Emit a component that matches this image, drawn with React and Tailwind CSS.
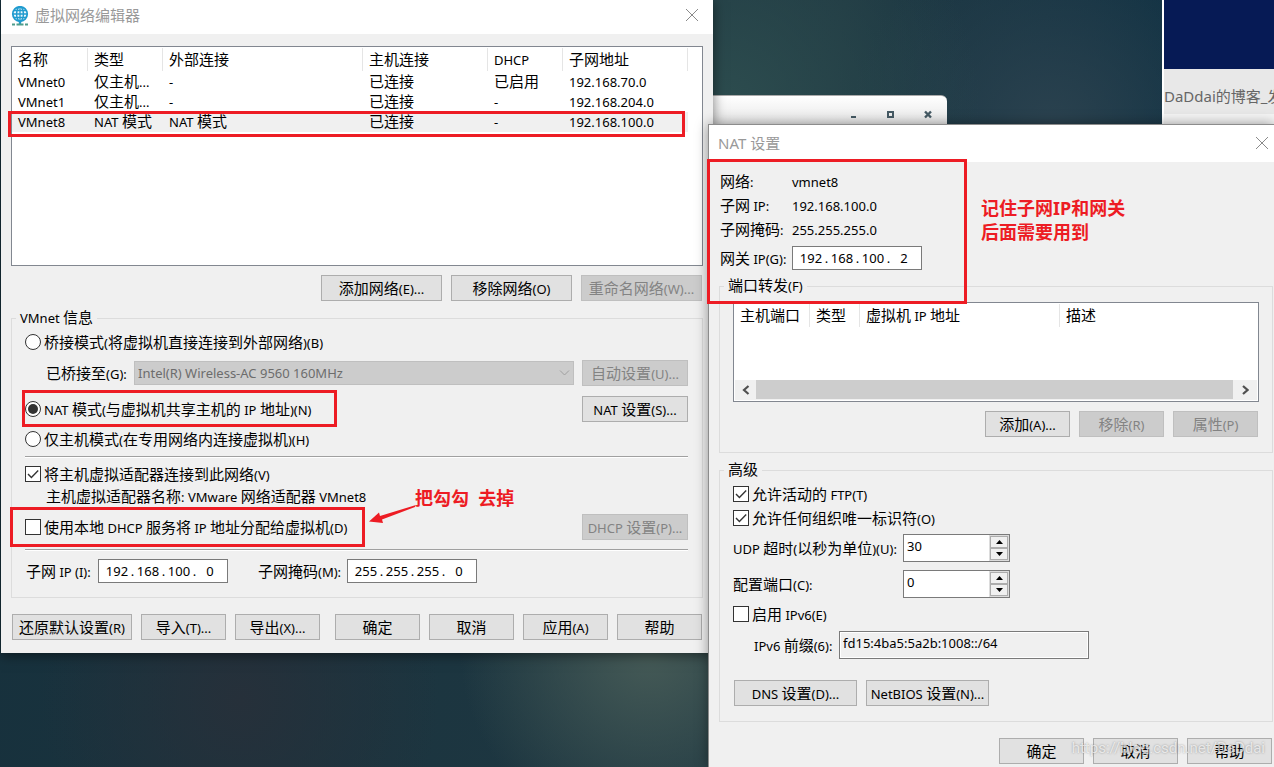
import React, { useState } from 'react';

// Chinese runs stay at the base size, latin runs are set a bit smaller
const Text = ({ children }) => (
  <span className="whitespace-pre">
    {children.split(/([\u4e00-\u9fff]+)/).map((part, i) =>
      i % 2 === 1 ? part : <span key={i} className="text-[13px] leading-none">{part}</span>
    )}
  </span>
);

const Button = ({ children, className = '', disabled = false }) => (
  <button
    type="button"
    disabled={disabled}
    className={`h-[26px] shrink-0 flex items-center justify-center border border-[#adadad] bg-[#e1e1e1] pb-px leading-5 disabled:border-[#bfbfbf] disabled:bg-[#ccc] disabled:text-[#838383] ${className}`}
  >
    <Text>{children}</Text>
  </button>
);

const CloseIcon = () => (
  <svg width="14" height="14" viewBox="0 0 14 14" stroke="#8a8a8a" fill="none">
    <path d="M1 1l12 12M13 1L1 13" />
  </svg>
);

const GlobeIcon = () => (
  <svg width="18" height="22" viewBox="0 0 18 22" fill="none">
    <circle cx="9" cy="8" r="7.2" fill="#e9f6fc" stroke="#1f9bcf" strokeWidth="1.8" />
    <ellipse cx="9" cy="8" rx="3.4" ry="7.2" stroke="#1f9bcf" strokeWidth="1.4" />
    <path d="M9 1v14M2 8h14M3 4.500h12M3 11.500h12" stroke="#1f9bcf" strokeWidth="1.3" />
    <path d="M9 15v3" stroke="#1f9bcf" strokeWidth="2.4" />
    <path d="M1 18.500h3M5.500 18.500h7M14 18.500h3" stroke="#4f9d8c" strokeWidth="2" />
  </svg>
);

const Radio = ({ id, value, selected, onSelect, children }) => (
  <div className="h-[26px] flex items-center">
    <span className="grid place-items-center">
      <input
        id={id}
        type="radio"
        name="vmnet-mode"
        value={value}
        checked={selected === value}
        onChange={() => onSelect(value)}
        className="peer appearance-none col-start-1 row-start-1 size-4 rounded-full border border-[#333] bg-white"
      />
      <span className="hidden peer-checked:block col-start-1 row-start-1 size-[10px] rounded-full bg-[#333] pointer-events-none" />
    </span>
    <label htmlFor={id} className="ml-[3px] pb-px leading-5"><Text>{children}</Text></label>
  </div>
);

const Checkbox = ({ id, defaultChecked = false, children }) => (
  <div className="h-6 flex items-center">
    <span className="grid place-items-center">
      <input
        id={id}
        type="checkbox"
        defaultChecked={defaultChecked}
        className="peer appearance-none col-start-1 row-start-1 size-4 border border-[#333] bg-white"
      />
      <svg
        className="hidden peer-checked:block col-start-1 row-start-1 pointer-events-none"
        width="12" height="12" viewBox="0 0 12 12" fill="none" stroke="#333" strokeWidth="1.4"
      >
        <path d="M1 6l3.4 3.4L11.2 2.6" />
      </svg>
    </span>
    <label htmlFor={id} className="ml-[3px] pb-px leading-5"><Text>{children}</Text></label>
  </div>
);

const IpInput = ({ id, parts }) => (
  <div className="w-[130px] h-6 pl-[6px] flex items-center border border-[#7a7a7a] bg-white text-[13px]">
    {parts.map((part, i) => (
      <React.Fragment key={i}>
        {i > 0 && <span className="w-[7px] pb-px text-center">.</span>}
        <input
          id={i === 0 ? id : undefined}
          aria-label={i === 0 ? undefined : `${id} ${i + 1}`}
          defaultValue={part}
          className="w-6 h-5 pb-px text-center outline-none"
        />
      </React.Fragment>
    ))}
  </div>
);

const Spinner = ({ id, value }) => (
  <div className="w-[107px] h-7 flex border border-[#7a7a7a] bg-white">
    <input id={id} defaultValue={value} className="w-[85px] h-6 pl-[3px] pb-[2px] text-[13px] outline-none" />
    <div className="p-px flex-1 flex flex-col bg-[#dcdcdc]">
      <button type="button" aria-label="+" className="flex-1 grid place-items-center border border-[#adadad] bg-[#f0f0f0]">
        <svg width="7" height="4" viewBox="0 0 7 4"><path d="M0 4L3.500 0L7 4z" /></svg>
      </button>
      <button type="button" aria-label="-" className="flex-1 grid place-items-center border border-[#adadad] bg-[#f0f0f0]">
        <svg width="7" height="4" viewBox="0 0 7 4"><path d="M0 0L3.500 4L7 0z" /></svg>
      </button>
    </div>
  </div>
);

const Group = ({ title, className = '', children }) => (
  <fieldset className={`border border-[#dcdcdc] px-1 ${className}`}>
    <legend className="h-5 px-1 pb-px leading-[19px]"><Text>{title}</Text></legend>
    <div className="px-[9px]">{children}</div>
  </fieldset>
);

const Divider = () => <hr className="h-[2px] border-t border-b border-t-[#a0a0a0] border-b-white" />;

const networks = [
  ['VMnet0', '仅主机...', '-', '已连接', '已启用', '192.168.70.0'],
  ['VMnet1', '仅主机...', '-', '已连接', '-', '192.168.204.0'],
  ['VMnet8', 'NAT 模式', 'NAT 模式', '已连接', '-', '192.168.100.0'],
];

const HeaderCell = ({ children, last = false }) => (
  <th className="h-[25px] p-0 font-normal">
    <div className={`h-[23px] pl-[6px] leading-[22px] ${last ? '' : 'border-r border-[#e5e5e5]'}`}>
      <Text>{children}</Text>
    </div>
  </th>
);

const NetworkEditor = () => {
  const [mode, setMode] = useState('nat');

  return (
    <section className="absolute left-px top-0 w-[712px] bg-[#f0f0f0] shadow-[0_2px_12px_rgba(0,0,0,0.5)]">
      <header className="h-[34px] pl-[10px] pr-[14px] flex items-center bg-white">
        <GlobeIcon />
        <h1 className="ml-[6px] mb-1 text-[#999]">虚拟网络编辑器</h1>
        <button type="button" aria-label="关闭" className="ml-auto mb-1"><CloseIcon /></button>
      </header>

      <div className="px-[10px] pt-3 pb-[13px]">
        <div className="relative h-[220px] border border-[#828790] bg-white">
          <table className="w-[676px] table-fixed border-collapse text-left">
            <colgroup>
              <col className="w-[76px]" />
              <col className="w-[75px]" />
              <col className="w-[200px]" />
              <col className="w-[125px]" />
              <col className="w-[75px]" />
              <col className="w-[125px]" />
            </colgroup>
            <thead>
              <tr>
                {['名称', '类型', '外部连接', '主机连接', 'DHCP', '子网地址'].map((name) => (
                  <HeaderCell key={name}>{name}</HeaderCell>
                ))}
              </tr>
            </thead>
            <tbody>
              {networks.map((row) => (
                <tr key={row[0]} className="last:bg-[#f0f0f0]">
                  {row.map((cell, i) => (
                    <td key={i} className="h-5 p-0 pl-[6px] pb-px leading-[19px]"><Text>{cell}</Text></td>
                  ))}
                </tr>
              ))}
            </tbody>
          </table>
          <div className="absolute -left-1 top-16 w-[677px] h-[26px] border-3 border-[#ed1c24] pointer-events-none" />
        </div>

        <div className="mt-[9px] pr-px flex justify-end gap-[9px]">
          <Button className="w-[121px]">添加网络(E)...</Button>
          <Button className="w-[121px]">移除网络(O)</Button>
          <Button className="w-[121px]" disabled>重命名网络(W)...</Button>
        </div>

        <Group title="VMnet 信息" className="mt-[7px] pb-[14px]">
          <div className="pt-px pr-px">
            <Radio id="mode-bridged" value="bridged" selected={mode} onSelect={setMode}>
              桥接模式(将虚拟机直接连接到外部网络)(B)
            </Radio>
            <div className="mt-[5px] pl-[21px] h-[26px] flex items-center">
              <label htmlFor="bridge-to" className="w-[88px] pb-px"><Text>已桥接至(G):</Text></label>
              <div className="relative flex-1 mr-2">
                <select id="bridge-to" disabled className="appearance-none block w-full h-6 pl-[3px] border border-[#bfbfbf] bg-[#ccc] text-[13px] text-[#6d6d6d] opacity-100">
                  <option>Intel(R) Wireless-AC 9560 160MHz</option>
                </select>
                <svg className="absolute right-1 top-2 pointer-events-none" width="11" height="8" viewBox="0 0 11 8" fill="none" stroke="#a0a0a0">
                  <path d="M1 1.500l4.500 4.500L10 1.500" />
                </svg>
              </div>
              <Button className="w-[106px]" disabled>自动设置(U)...</Button>
            </div>
            <div className="relative mt-[10px] flex justify-between">
              <Radio id="mode-nat" value="nat" selected={mode} onSelect={setMode}>
                NAT 模式(与虚拟机共享主机的 IP 地址)(N)
              </Radio>
              <Button className="w-[106px]">NAT 设置(S)...</Button>
              <div className="absolute -left-[3px] -top-[6px] w-[315px] h-[37px] border-3 border-[#ed1c24] pointer-events-none" />
            </div>
            <div className="mt-1 mb-1">
              <Radio id="mode-host" value="host" selected={mode} onSelect={setMode}>
                仅主机模式(在专用网络内连接虚拟机)(H)
              </Radio>
            </div>
            <Divider />
            <div className="pt-1">
              <Checkbox id="host-adapter" defaultChecked>将主机虚拟适配器连接到此网络(V)</Checkbox>
            </div>
            <p className="pl-[21px] h-[22px] leading-5"><Text>主机虚拟适配器名称: VMware 网络适配器 VMnet8</Text></p>
            <div className="relative mt-[6px] mb-[9px] flex items-center justify-between">
              <Checkbox id="use-dhcp">使用本地 DHCP 服务将 IP 地址分配给虚拟机(D)</Checkbox>
              <Button className="w-[106px]" disabled>DHCP 设置(P)...</Button>
              <div className="absolute -left-[15px] -top-[7px] w-[355px] h-10 border-3 border-[#ed1c24] pointer-events-none" />
              <svg className="absolute left-[344px] -top-[10px]" width="48" height="20" viewBox="0 0 48 20" fill="#ed1c24">
                <path d="M0 17.500L10 8.500L11 12L47 1L46 3L13 15.500L14 19z" />
              </svg>
              <p className="absolute left-[390px] -top-7 text-lg leading-6 font-bold whitespace-pre text-[#ed1c24]">把勾勾  去掉</p>
            </div>
            <Divider />
            <div className="mt-2 pl-px flex items-center">
              <label htmlFor="subnet-ip" className="w-[72px] pb-px"><Text>子网 IP (I):</Text></label>
              <IpInput id="subnet-ip" parts={['192', '168', '100', '0']} />
              <label htmlFor="subnet-mask" className="ml-[30px] w-[89px] pb-px"><Text>子网掩码(M):</Text></label>
              <IpInput id="subnet-mask" parts={['255', '255', '255', '0']} />
            </div>
          </div>
        </Group>

        <footer className="mt-4 px-px flex justify-between">
          <div className="flex gap-[9px]">
            <Button className="w-[120px]">还原默认设置(R)</Button>
            <Button className="w-[85px]">导入(T)...</Button>
            <Button className="w-[85px]">导出(X)...</Button>
          </div>
          <div className="flex gap-[9px]">
            <Button className="w-[85px]">确定</Button>
            <Button className="w-[85px]">取消</Button>
            <Button className="w-[85px]">应用(A)</Button>
            <Button className="w-[85px]">帮助</Button>
          </div>
        </footer>
      </div>
    </section>
  );
};

const NatSettings = () => (
  <section className="absolute left-[708px] right-0 top-[124px] bottom-0 border-l border-t border-[#8c8c8c] bg-[#f0f0f0] shadow-[0_0_12px_rgba(0,0,0,0.4)]">
    <header className="h-[37px] pl-[9px] pr-[5px] pb-px flex items-center justify-between bg-white">
      <h2 className="text-[#999]">NAT 设置</h2>
      <button type="button" aria-label="关闭"><CloseIcon /></button>
    </header>

    <div className="pl-[10px] pr-px pt-2">
      <div className="relative pl-px">
        <dl className="grid grid-cols-[72px_1fr] auto-rows-[24px] leading-[22px]">
          <dt><Text>网络:</Text></dt>
          <dd><Text>vmnet8</Text></dd>
          <dt><Text>子网 IP:</Text></dt>
          <dd><Text>192.168.100.0</Text></dd>
          <dt><Text>子网掩码:</Text></dt>
          <dd><Text>255.255.255.0</Text></dd>
        </dl>
        <div className="mt-1 flex items-center">
          <label htmlFor="gateway" className="w-[72px] pb-px"><Text>网关 IP(G):</Text></label>
          <IpInput id="gateway" parts={['192', '168', '100', '2']} />
        </div>
        <p className="absolute left-[262px] top-[26px] text-lg leading-6 font-bold text-[#ed1c24]">
          记住子网IP和网关<br />后面需要用到
        </p>
        <div className="absolute z-10 -left-3 -top-[11px] w-[260px] h-[145px] border-3 border-[#ed1c24] pointer-events-none" />
      </div>

      <Group title="端口转发(F)" className="mt-[6px] pb-[15px]">
        <div className="pt-[6px]">
          <div className="h-[100px] flex flex-col justify-between border border-[#828790] bg-white">
            <table className="w-full table-fixed border-collapse text-left">
              <colgroup>
                <col className="w-[76px]" />
                <col className="w-[50px]" />
                <col className="w-[200px]" />
                <col />
              </colgroup>
              <thead>
                <tr>
                  <HeaderCell>主机端口</HeaderCell>
                  <HeaderCell>类型</HeaderCell>
                  <HeaderCell>虚拟机 IP 地址</HeaderCell>
                  <HeaderCell last>描述</HeaderCell>
                </tr>
              </thead>
            </table>
            <div className="mx-px mb-px h-5 flex bg-[#f0f0f0]">
              <button type="button" aria-label="向左" className="w-[21px] grid place-items-center">
                <svg width="8" height="10" viewBox="0 0 8 10" fill="none" stroke="#505050" strokeWidth="2.2"><path d="M6.500 1L2 5l4.500 4" /></svg>
              </button>
              <div className="flex-1 mb-px bg-[#cdcdcd]" />
              <button type="button" aria-label="向右" className="w-6 grid place-items-center">
                <svg width="8" height="10" viewBox="0 0 8 10" fill="none" stroke="#505050" strokeWidth="2.2"><path d="M2 1l4.500 4L2 9" /></svg>
              </button>
            </div>
          </div>
          <div className="mt-[9px] pr-px flex justify-end gap-[9px]">
            <Button className="w-[85px]">添加(A)...</Button>
            <Button className="w-[85px]" disabled>移除(R)</Button>
            <Button className="w-[85px]" disabled>属性(P)</Button>
          </div>
        </div>
      </Group>

      <Group title="高级" className="mt-[7px] pb-[15px]">
        <div className="pt-[2px]">
          <Checkbox id="active-ftp" defaultChecked>允许活动的 FTP(T)</Checkbox>
          <Checkbox id="any-oui" defaultChecked>允许任何组织唯一标识符(O)</Checkbox>
          <div className="mt-1 flex items-center">
            <label htmlFor="udp-timeout" className="w-[170px] pb-px"><Text>UDP 超时(以秒为单位)(U):</Text></label>
            <Spinner id="udp-timeout" value="30" />
          </div>
          <div className="mt-2 mb-1 flex items-center">
            <label htmlFor="config-port" className="w-[170px] pb-px"><Text>配置端口(C):</Text></label>
            <Spinner id="config-port" value="0" />
          </div>
          <Checkbox id="enable-ipv6">启用 IPv6(E)</Checkbox>
          <div className="mt-[5px] pl-[21px] flex items-center">
            <label htmlFor="ipv6-prefix" className="w-[85px] pb-px"><Text>IPv6 前缀(6):</Text></label>
            <input
              id="ipv6-prefix"
              readOnly
              value="fd15:4ba5:5a2b:1008::/64"
              className="w-[250px] h-7 pl-[3px] pb-1 border border-[#7a7a7a] bg-[#f0f0f0] text-[13px] shadow-[inset_0_0_0_1px_#fff] outline-none"
            />
          </div>
          <div className="mt-[21px] pl-px flex gap-[9px]">
            <Button className="w-[123px]">DNS 设置(D)...</Button>
            <Button className="w-[123px]">NetBIOS 设置(N)...</Button>
          </div>
        </div>
      </Group>

      <footer className="relative mt-4 pr-px flex justify-end gap-[9px]">
        <Button className="w-[85px]">确定</Button>
        <Button className="w-[85px]">取消</Button>
        <Button className="w-[85px]">帮助</Button>
        <span className="absolute right-2 top-0 font-['Roboto'] text-[15px] leading-5 text-white/70 [text-shadow:0_0_2px_rgba(90,90,90,0.6)] pointer-events-none">
          https://blog.csdn.net/DaDdai
        </span>
      </footer>
    </div>
  </section>
);

const BackWindow = () => (
  <div className="absolute left-[600px] top-[95px] w-[347px] h-10 pt-[14px] pr-[15px] flex justify-end gap-[29px] rounded-t-md border-t border-[#aaa] bg-linear-to-b from-white to-[#dedede]">
    <svg width="8" height="10" viewBox="0 0 8 10" fill="#455a64"><path d="M1 6h5v2H1z" /></svg>
    <svg width="8" height="10" viewBox="0 0 8 10" fill="none" stroke="#455a64" strokeWidth="2"><path d="M1 2h5v5H1z" /></svg>
    <svg width="8" height="10" viewBox="0 0 8 10" fill="none" stroke="#455a64" strokeWidth="2.4"><path d="M1 1.500l6 6M7 1.500L1 7.500" /></svg>
  </div>
);

const BrowserEdge = () => (
  <div className="absolute left-[1162px] right-0 top-0 h-32 overflow-hidden border-l-2 border-white bg-[#f5f5f5]">
    <div className="h-[69px] bg-[#061a55]" />
    <div className="h-[45px] pt-[15px] leading-6 whitespace-nowrap bg-[#e8e8e8] text-[#666]">DaDdai的博客_发</div>
  </div>
);

const App = () => (
  <main className="relative h-screen overflow-hidden bg-[#1b3340] bg-[radial-gradient(circle_at_650px_650px,#465b57_0,transparent_190px),radial-gradient(circle_at_240px_700px,#26303a_0,transparent_200px),radial-gradient(circle_at_720px_110px,#2d4d4f_0,transparent_260px),radial-gradient(circle_at_1050px_130px,#2b424f_0,transparent_200px),linear-gradient(100deg,#16303c_0,#1f3842_60%,#0b2f44_92%)] font-['Noto_Sans','Noto_Sans_CJK_SC',sans-serif] text-[15px] leading-5 text-black">
    <BackWindow />
    <BrowserEdge />
    <NetworkEditor />
    <NatSettings />
  </main>
);

export default App;
